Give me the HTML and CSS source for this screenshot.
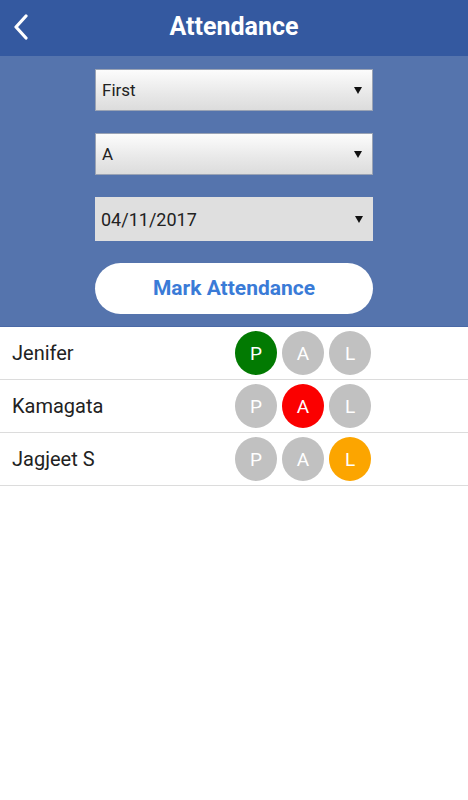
FILE: index.html
```html
<!DOCTYPE html>
<html>
<head>
<meta charset="utf-8">
<link rel="stylesheet" href="styles.css">
</head>
<body>
<header class="topbar">
  <div class="back">
    <svg width="18" height="26" viewBox="0 0 18 26"><path d="M14 2 L4 13 L14 24" fill="none" stroke="#fff" stroke-width="3.2" stroke-linecap="round" stroke-linejoin="round"/></svg>
  </div>
  <h1 class="title">Attendance</h1>
  <div></div>
</header>
<section class="panel">
  <div class="select grad"><span>First</span><i class="arrow"></i></div>
  <div class="select grad"><span>A</span><i class="arrow"></i></div>
  <div class="select flat"><span>04/11/2017</span><i class="arrow"></i></div>
  <button class="mark">Mark Attendance</button>
</section>
<ul class="list">
  <li class="row"><span class="name">Jenifer</span><div class="opts"><span class="dot p">P</span><span class="dot">A</span><span class="dot">L</span></div></li>
  <li class="row"><span class="name">Kamagata</span><div class="opts"><span class="dot">P</span><span class="dot a">A</span><span class="dot">L</span></div></li>
  <li class="row"><span class="name">Jagjeet S</span><div class="opts"><span class="dot">P</span><span class="dot">A</span><span class="dot l">L</span></div></li>
</ul>
</body>
</html>
```
FILE: styles.css
```css
* { box-sizing: border-box; }
html, body { margin: 0; padding: 0; background: #fff; }
body { font-family: Roboto, "Liberation Sans", sans-serif; width: 468px; }

.topbar {
  height: 56px;
  background: #3459a0;
  display: grid;
  grid-template-columns: 56px 1fr 56px;
  align-items: center;
}
.back { display: flex; align-items: center; padding-left: 12px; padding-bottom: 2px; }
.title {
  margin: 0;
  text-align: center;
  color: #fff;
  font-size: 25px;
  font-weight: 700;
  padding-bottom: 3px;
}

.panel {
  background: #5574ad;
  padding: 13px 95px 12px;
  display: flex;
  flex-direction: column;
  border-bottom: 1px solid #4a69a6;
}
.select {
  height: 42px;
  display: flex;
  align-items: center;
  justify-content: space-between;
  padding: 0 10px 0 6px;
  font-size: 17px;
  color: #222;
  margin-bottom: 22px;
}
.select.grad {
  background: linear-gradient(#fcfcfc, #e8e8e8 60%, #dcdcdc);
  border: 1px solid #9aa3b4;
}
.select.flat {
  height: 44px;
  background: #dfdfdf;
  padding-left: 6px;
  font-size: 18px;
  margin-bottom: 22px;
}
.arrow {
  width: 0; height: 0;
  border-left: 4px solid transparent;
  border-right: 4px solid transparent;
  border-top: 7px solid #111;
}
.mark {
  height: 51px;
  border: none;
  border-radius: 26px;
  background: #fff;
  color: #3a7bd7;
  font-family: Roboto, "Liberation Sans", sans-serif;
  font-weight: 700;
  font-size: 21px;
  padding: 0 0 2px;
}

.list { list-style: none; margin: 0; padding: 0; }
.row {
  height: 53px;
  border-bottom: 1px solid #dcdcdc;
  display: flex;
  align-items: center;
}
.name {
  width: 235px;
  padding-left: 12px;
  font-size: 20px;
  color: #222;
}
.opts { display: flex; gap: 5px; }
.dot {
  width: 42px;
  height: 44px;
  border-radius: 50%;
  background: #c1c1c1;
  color: #fff;
  font-size: 19px;
  display: flex;
  align-items: center;
  justify-content: center;
}
.dot.p { background: #027a02; }
.dot.a { background: #fb0000; }
.dot.l { background: #fca500; }
```
